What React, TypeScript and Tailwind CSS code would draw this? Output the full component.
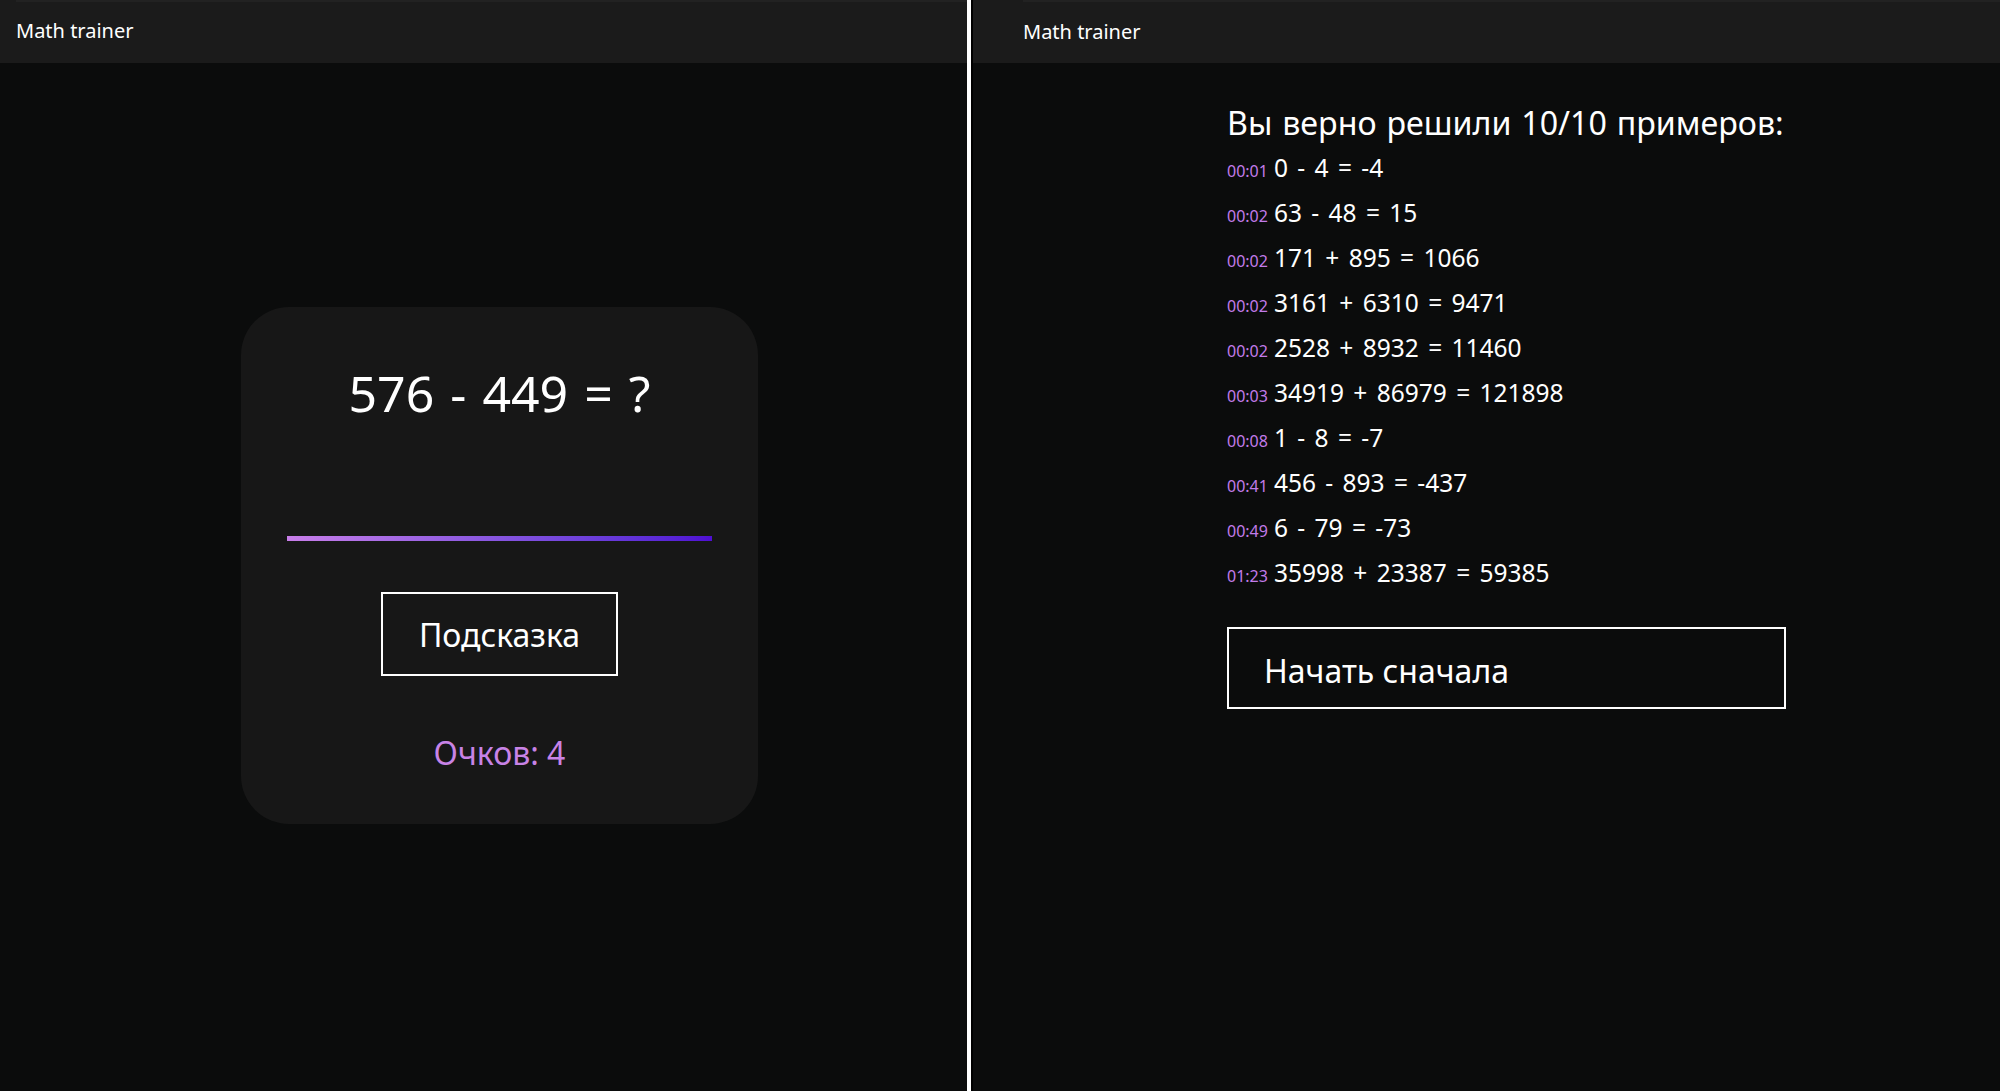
const font = "font-['Segoe_UI','Noto_Sans',sans-serif]"

const results = [
  { time: "00:01", expr: "0 - 4 = -4" },
  { time: "00:02", expr: "63 - 48 = 15" },
  { time: "00:02", expr: "171 + 895 = 1066" },
  { time: "00:02", expr: "3161 + 6310 = 9471" },
  { time: "00:02", expr: "2528 + 8932 = 11460" },
  { time: "00:03", expr: "34919 + 86979 = 121898" },
  { time: "00:08", expr: "1 - 8 = -7" },
  { time: "00:41", expr: "456 - 893 = -437" },
  { time: "00:49", expr: "6 - 79 = -73" },
  { time: "01:23", expr: "35998 + 23387 = 59385" },
]

const TitleBar = ({ offset }: { offset?: boolean }) => (
  <div className="h-[63px] shrink-0 bg-[#1b1b1b] border-t-2 border-[#222222] flex items-center">
    <span className={`text-[20px] text-white leading-none ${offset ? "-mt-[2px]" : "-mt-[4px]"}`}>Math trainer</span>
  </div>
)

const QuizPanel = () => (
  <div className="w-[967px] shrink-0 h-full flex flex-col bg-[#0b0c0c]">
    <div className="pl-[16px] bg-[#1b1b1b]">
      <TitleBar />
    </div>
    <div className="pt-[244px] pl-[241px]">
      <div className="w-[517px] h-[517px] rounded-[48px] bg-[#171717] flex flex-col items-center">
        <div className="pt-[54px] text-[50px] leading-[64px] text-white [word-spacing:3px]">576 - 449 = ?</div>
        <div className="mt-[111px] w-[425px] h-[5px] bg-gradient-to-r from-[#c87ee9] to-[#4f0ed3]" />
        <button className="mt-[51px] w-[237px] h-[84px] border-2 border-white text-white text-[32px] leading-none pt-[2px]">
          Подсказка
        </button>
        <div className="mt-[57px] text-[32px] leading-[40px] text-[#c883e6]">Очков: 4</div>
      </div>
    </div>
  </div>
)

const ResultsPanel = () => (
  <div className="flex-1 h-full flex flex-col bg-[#0b0c0c]">
    <div className="pl-[50px] bg-[#1b1b1b]">
      <TitleBar offset />
    </div>
    <div className="pl-[254px] pt-[40px]">
      <div className="w-[559px]">
        <h2 className="text-[32.2px] leading-[40px] mb-[2px] text-white whitespace-nowrap [word-spacing:1.5px]">Вы верно решили 10/10 примеров:</h2>
        {results.map((r, i) => (
          <div key={i} className="h-[45px] flex items-baseline">
            <span className="text-[16px] leading-[45px] text-[#c27be9] mr-[6px]">{r.time}</span>
            <span className="text-[24.5px] leading-[45px] text-white [word-spacing:3px]">{r.expr}</span>
          </div>
        ))}
        <button className="mt-[32px] w-full h-[82px] border-2 border-white flex items-center pl-[35px] pt-[6px] text-[32px] leading-[40px] text-white">
          Начать сначала
        </button>
      </div>
    </div>
  </div>
)

export default function App() {
  return (
    <div className={`${font} w-[2000px] h-[1091px] flex bg-[#0b0c0c] overflow-hidden`}>
      <QuizPanel />
      <div className="w-[4px] h-full bg-white shrink-0" />
      <div className="w-[2px] h-full bg-black shrink-0" />
      <ResultsPanel />
    </div>
  )
}
